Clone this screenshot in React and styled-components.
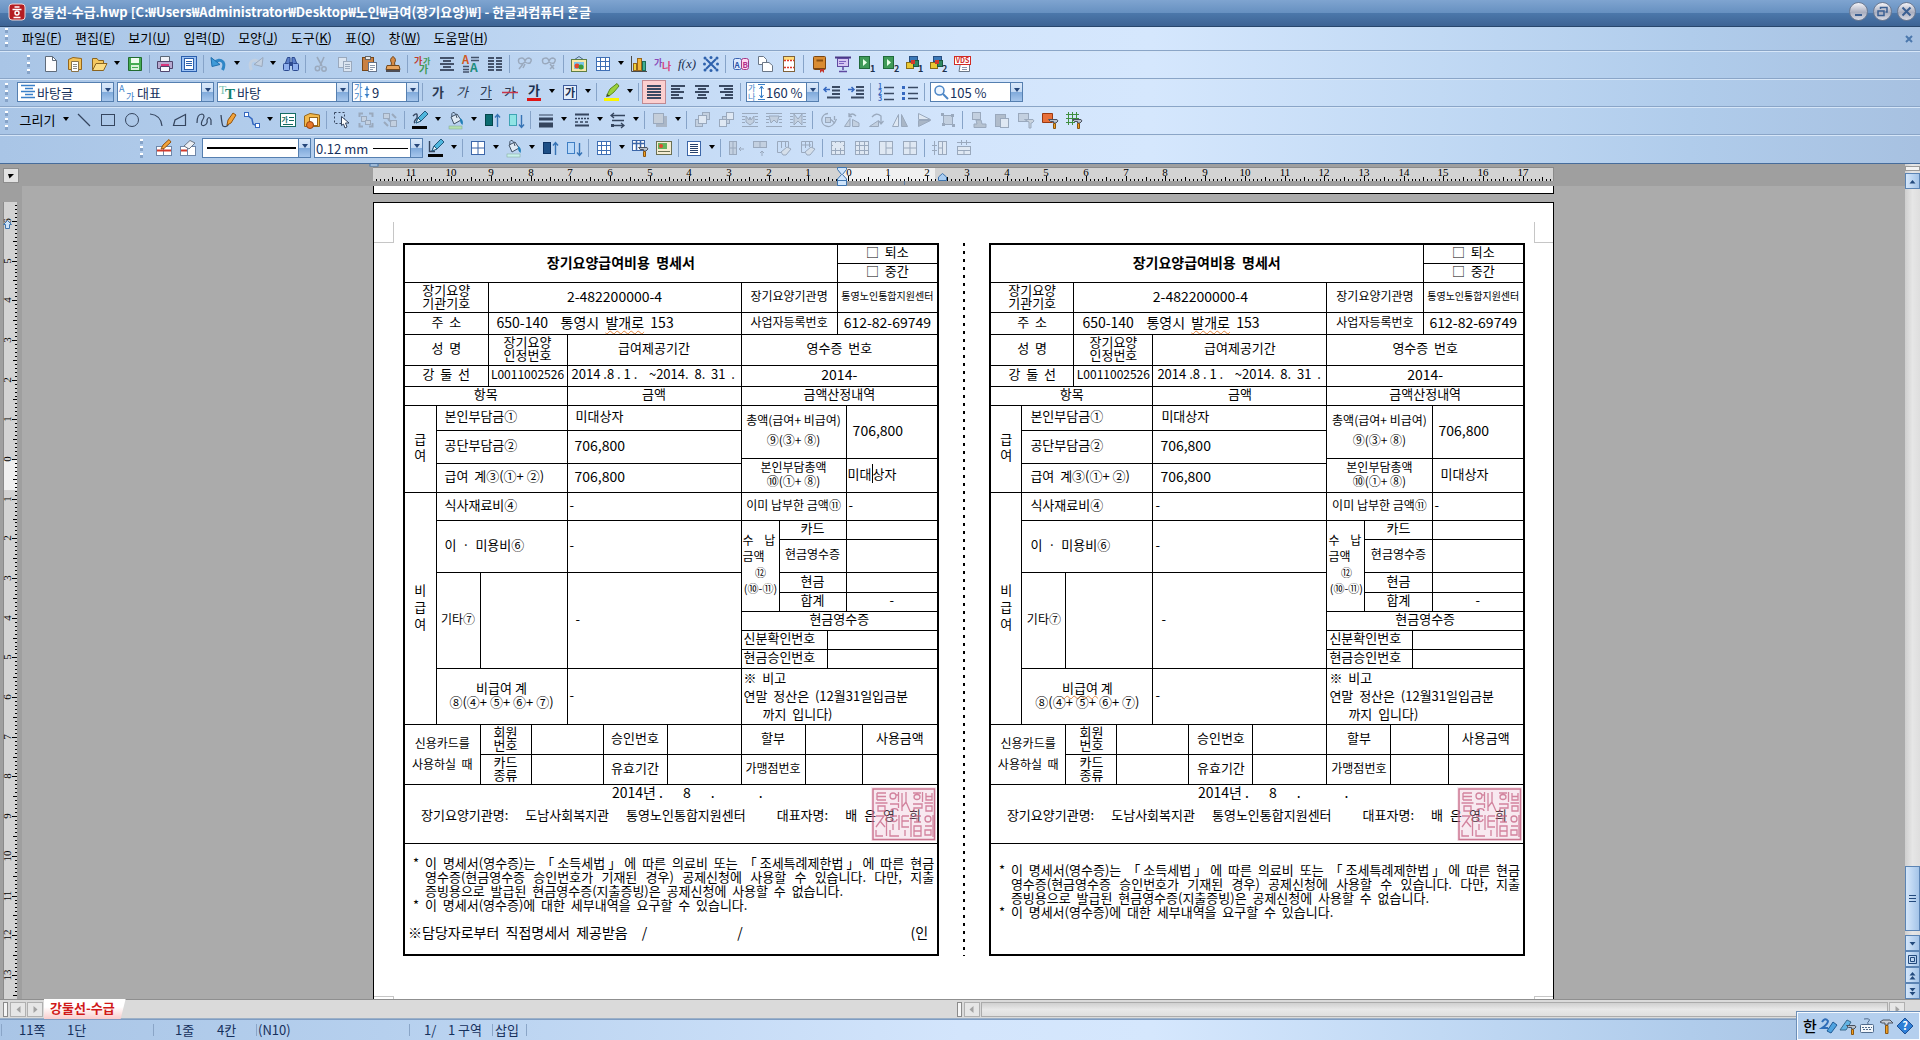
import React from 'react';
import styled, { createGlobalStyle, css } from 'styled-components';

const UI = '"Noto Sans CJK KR", "Noto Sans", sans-serif';
const INK = '#16305c';

const Global = createGlobalStyle`
  * { box-sizing: border-box; }
  html, body { margin: 0; height: 100%; }
  body { font-family: ${UI}; font-size: 13px; overflow: hidden; background: #ababab; }
  button, select, input { font: inherit; color: inherit; margin: 0; }
`;

/* ---------- icons, all on an 18 x 18 grid ---------- */

const line = (d, c = '#3a4a63', w = 1, extra = {}) => (
  <path d={d} stroke={c} strokeWidth={w} fill="none" {...extra} />
);
const fill = (d, c, s) => <path d={d} fill={c} stroke={s || 'none'} />;
const GR = '#9aa9bd';
const GF = '#c3d0e0';
const ga = (c, extra) => (
  <text x="9" y="14" fontSize="13" fontWeight="700" textAnchor="middle" fill={c} {...extra}>가</text>
);
const lines = (rows, c = '#3a4a63') => rows.map(([x, w], i) => (
  <rect key={i} x={x} y={2 + i * 3} width={w} height="2" fill={c} />
));
const grid = (c, bg = '#fff') => (
  <>
    <rect x="2.5" y="2.5" width="13" height="13" fill={bg} stroke={c} />
    {line('M6.5 2.5V15.5M11.5 2.5V15.5M2.5 6.5H15.5M2.5 11.5H15.5', c)}
  </>
);
const pen = (x = 0, y = 0) => (
  <g transform={`translate(${x} ${y})`}>
    {fill('M4 13L6 8L13 1L16 4L9 11Z', '#4fb6dd', '#24597c')}
    {fill('M4 13L6 8L9 11Z', '#e8f4fa', '#24597c')}
  </g>
);
const roller = (
  <>
    {fill('M7.5 8.5H16L17 10L15 12H12.5V10.5H9.5Z', '#b9c1cc', '#4a5260')}
    {fill('M12.5 12.5H14.5V17.5H12.5Z', '#f2a020', '#8a5510')}
  </>
);
const bucket = (under) => (
  <>
    {fill('M4 6L10 3L14 9L7 13Z', '#dfeaf4', '#3f5064')}
    {line('M5 6Q4 1 7 1.500Q9 2 10 7', '#3f5064')}
    {fill('M13 7Q17 9 15.500 14Q12.500 12 13 7Z', '#1f7fb8')}
    <rect x="2" y="15" width="13" height="3" fill={under} stroke="#7fa890" strokeWidth=".5" />
  </>
);
const play = (n) => (
  <>
    <rect x="1.5" y="1.5" width="10" height="12" fill="#3f9a58" stroke="#1f6a3b" />
    {fill('M5 4L9 7.500L5 11Z', '#e8ffe8')}
    <text x="12" y="17" fontSize="9" fontWeight="700" fill="#1c2f4c">{n}</text>
  </>
);
const cubes = (n) => (
  <>
    <rect x="3.500" y="1.500" width="8" height="5" fill="#3a78b8" stroke="#274e80" />
    <rect x="0.500" y="7.500" width="7" height="6" fill="#e9c832" stroke="#8a6d17" />
    <rect x="7.500" y="5.500" width="5" height="6" fill="#2f8a63" stroke="#1c5a40" />
    <rect x="5" y="5" width="4" height="4" fill="#d33a2c" />
    <text x="12" y="17" fontSize="9" fontWeight="700" fill="#1c2f4c">{n}</text>
  </>
);
const wrap = (inner) => (
  <>
    {line('M1 2.5H17M1 5.5H4M14 5.5H17M1 8.5H4M14 8.5H17M1 11.5H4M14 11.5H17M1 15.5H17', GR)}
    {fill(inner, GF, GR)}
  </>
);
const rubber = (extra) => (
  <>
    {line('M2.5 2.5H13.5V9M2.5 2.5V13.5H6M6.500 2.500V9M10.5 2.5V8', GR)}
    {fill('M6 13L12 8L16 10L11 16H8Z', '#d5dfea', GR)}
    {extra}
  </>
);
const upDown = (c1, c2, up) => (
  <>
    <rect x="2.5" y="3.5" width="7" height="11" fill={c1} stroke={c2} />
    {up ? line('M14.5 4V16M12 6.5L14.5 3.5L17 6.5', '#3673b5', 1.4) : line('M14.5 4V16M12 13.5L14.5 16.5L17 13.5', '#3673b5', 1.4)}
  </>
);

const ICONS = {
  new: ['새 문서', <>{fill('M3.5 1.5H10.5L14.5 5.5V16.5H3.5Z', '#fdfdff', '#5f6b7a')}{line('M10.5 1.5V5.5H14.5', '#5f6b7a')}</>],
  tmpl: ['문서마당', <>{fill('M2.500 4.500L7 2.500L15.500 3.500V14.500H2.500Z', '#f3c35a', '#96661b')}{fill('M5.5 6.5H12.5V16.5H5.5Z', '#fff', '#8a7348')}{line('M7 9.5H11M7 11.5H11M7 13.5H11', '#8b8b8b')}</>],
  folder: ['불러오기', <>{fill('M2.5 15.500V3.500H7L8.500 5.500H13.500V8', '#f4c75f', '#8a6420')}{fill('M2.5 15.5L6 8.5H17L13.5 15.5Z', '#fbdc84', '#8a6420')}</>],
  save: ['저장하기', <>{fill('M2.5 2.500H15.500V15.500H2.500Z', '#45ab52', '#226b30')}<rect x="5" y="3" width="8" height="5" fill="#eefbef" /><rect x="5" y="10" width="8" height="5" fill="#d8f2da" /><rect x="6" y="12" width="6" height="1" fill="#45ab52" /></>],
  print: ['인쇄', <>{fill('M4.500 1.500H13.500V6.500H4.500Z', '#eef2f9', '#596777')}{fill('M1.5 6.500H16.500V13.500H1.500Z', '#b7a9cf', '#51466d')}<rect x="5" y="9" width="8" height="2" fill="#d9357d" />{fill('M4.500 11.500H13.500V16.500H4.500Z', '#f7f9ff', '#51466d')}</>],
  preview: ['미리 보기', <><rect x="1.5" y="1.5" width="15" height="15" fill="#9cc2f3" stroke="#2b5fad" /><rect x="4.5" y="3.5" width="9" height="11" fill="#fff" stroke="#2b5fad" />{line('M6 6.5H12M6 8.5H12M6 10.5H12', '#2b5fad')}</>],
  undo: ['되돌리기', <>{line('M4 8Q9 3 13 7Q15 10 12.500 15', '#2f86c6', 3)}{fill('M1 2.500L2 11.500L10 9.500Z', '#3e9ad8', '#1f6fae')}</>],
  redo: ['다시 실행', <>{line('M14 8Q9 3 5 7Q3 10 5.500 15', GF, 3)}{fill('M17 2.500L16 11.500L8 9.500Z', GF, GR)}</>],
  find: ['찾기', <>{fill('M3.500 8L5.500 2.500H8V8M10 8V2.500H12.500L14.500 8', '#5b7fc9', '#2c4a90')}<rect x="1.500" y="8.500" width="6" height="7" rx="1" fill="#8fb0ee" stroke="#2c4a90" /><rect x="10.500" y="8.500" width="6" height="7" rx="1" fill="#8fb0ee" stroke="#2c4a90" /><rect x="7" y="7" width="4" height="4" fill="#2c4a90" /></>],
  cut: ['오려 두기', <>{line('M5 2L10 11M12 2L8 11', GR, 1.6)}<circle cx="5.500" cy="13.500" r="2.200" fill="none" stroke={GR} strokeWidth="1.500" /><circle cx="12" cy="14" r="2.200" fill="none" stroke={GR} strokeWidth="1.500" /></>],
  copy: ['복사하기', <><rect x="2.500" y="2.500" width="8" height="10" fill="#dbe5f1" stroke={GR} /><rect x="7.500" y="6.500" width="8" height="10" fill="#dbe5f1" stroke={GR} />{line('M9 9.500H14M9 11.500H14M9 13.500H14', GR)}</>],
  paste: ['붙이기', <><rect x="2.500" y="2.500" width="11" height="13" fill="#c98042" stroke="#774617" /><rect x="5.500" y="1.500" width="5" height="3" fill="#e8e8e8" stroke="#666" /><rect x="8.500" y="7.500" width="8" height="9" fill="#fff" stroke="#65738a" />{line('M10 10.500H15M10 12.500H15M10 14.500H13', '#8a97ab')}</>],
  stamp: ['모양 복사', <>{fill('M7.500 8Q5 4 9 1.500Q13 4 10.500 8L11 10.500H7Z', '#d58a45', '#74481c')}{fill('M3 10.500H15L16 14.500H2Z', '#e7a35c', '#74481c')}<rect x="2" y="15" width="14" height="2" fill="#4d4d55" /></>],
  charshape: ['글자 모양', <><text x="0" y="9" fontSize="9" fontWeight="700" fill="#c23a2c">가</text><text x="9" y="9" fontSize="8" fontWeight="700" fill="#3f9a58">가</text><text x="5" y="18" fontSize="10" fontWeight="700" fill="#3f9a58">가</text></>],
  parashape: ['문단 모양', <>{lines([[2, 14], [5, 8], [2, 14], [5, 8], [2, 14]], '#44526a')}</>],
  style: ['스타일', <><text x="0" y="9" fontSize="11" fontWeight="700" fill="#d1571d">A</text><text x="8" y="17" fontSize="12" fontWeight="700" fill="#1f8d7d">A</text>{line('M9 2.500H17M9 5.500H17M1 11.500H7M1 14.500H7M1 17H7', '#44526a', 1.500)}</>],
  columns: ['다단', <>{[2, 5, 8, 11, 14].map((y) => <g key={y}><rect x="2" y={y} width="6" height="2" fill="#44526a" /><rect x="10" y={y} width="6" height="2" fill="#44526a" /></g>)}</>],
  link1: ['하이퍼링크', <>{line('M3 8Q1 3 6 3Q8 3 9 6Q10 3 13 3Q17 4 14 8Q12 9 9 7Q6 10 3 8M7 9L3 14M9 9L7 13', GR, 1.500)}</>],
  link2: ['연결 삭제', <>{line('M3 8Q1 3 6 3Q8 3 9 6Q10 3 13 3Q17 4 14 8Q12 9 9 7Q6 10 3 8M10 9L14 14M14 10L10 14', GR, 1.500)}</>],
  picture: ['그림', <>{line('M4 5L9 1.500L14 5', '#4b6a8a')}<rect x="1.500" y="4.500" width="15" height="12" fill="#f7e9a8" stroke="#5f7d42" /><rect x="4" y="7" width="10" height="7" fill="#7cc5e8" /><circle cx="7" cy="11" r="2.500" fill="#e4472a" /><circle cx="11" cy="12" r="2.500" fill="#3b9a3a" /></>],
  table: ['표', grid('#3f6fb4')],
  chart: ['차트', <>{line('M1.500 1V16.500H17', '#4a4a4a')}<rect x="3.500" y="8.500" width="3" height="7" fill="#f2d23a" stroke="#96661b" /><rect x="7.500" y="3.500" width="4" height="12" fill="#f2b43a" stroke="#96661b" /><rect x="12.500" y="6.500" width="3" height="9" fill="#3fae92" stroke="#1c6a57" /></>],
  gana: ['글맵시', <><text x="0" y="11" fontSize="9" fontWeight="700" fill="#8b49b9">가</text><text x="8" y="15" fontSize="10" fontWeight="700" fill="#d8457f">나</text></>],
  fx: ['수식', <text x="9" y="13" fontSize="13" fontStyle="italic" fontFamily="Liberation Serif" textAnchor="middle" fill="#1b2f4f">f(x)</text>],
  snow: ['문자표', <>{line('M4 4L14 14M14 4L4 14', '#2f62ad', 2)}{[[9, 2.5], [9, 15.5], [2.5, 9], [15.5, 9], [3, 3], [15, 3], [3, 15], [15, 15]].map(([x, y]) => <circle key={`${x} ${y}`} cx={x} cy={y} r="1.500" fill="#2f62ad" />)}</>],
  ab: ['찾아 바꾸기', <><rect x="1.500" y="3.500" width="8" height="11" rx="2" fill="#dbe9ff" stroke="#3a62b0" /><rect x="9.500" y="3.500" width="7" height="11" rx="2" fill="#ffd6ef" stroke="#a33a86" /><text x="2.500" y="12.500" fontSize="8" fontWeight="700" fill="#2c55a8">A</text><text x="10.500" y="12.500" fontSize="8" fontWeight="700" fill="#b0308a">B</text></>],
  pages: ['쪽 복사', <>{fill('M2.500 1.500H7.500L10.500 4.500V9.500H2.500Z', '#fff', '#6b7787')}{fill('M6.500 7.500H13L16.500 10.500V16.500H6.500Z', '#fff', '#6b7787')}</>],
  pagered: ['쪽 여백', <><rect x="3.500" y="1.500" width="11" height="15" fill="#fff" stroke="#80623a" /><rect x="4" y="2" width="10" height="3" fill="#ffdc7a" />{line('M4 5.500H14M4 12.500H14', '#e0382a', 1.500, { strokeDasharray: '2 1' })}</>],
  book: ['사전', <><rect x="3.500" y="1.500" width="12" height="13" rx="1" fill="#d98c32" stroke="#7a4612" />{line('M6.500 5.500H13', '#8a5010', 2)}<path d="M10 14V18L12 16L14 18V14Z" fill="#c3352b" />{line('M3.500 13.500H15.500', '#7a4612')}</>],
  board: ['프레젠테이션', <>{line('M1 2.500H17', '#4b3a86', 2)}<rect x="3.500" y="3.500" width="11" height="8" fill="#d6c7f2" stroke="#5f4aa0" />{line('M5 6.500H12M5 8.500H10', '#7a61c0')}{line('M9 12V15M5 16.500H13', '#5f4aa0', 1.500)}</>],
  play1: ['매크로 1', play(1)],
  play2: ['매크로 2', play(2)],
  cube1: ['스크립트 1', cubes(1)],
  cube2: ['스크립트 2', cubes(2)],
  vds: ['VDS', <>{fill('M6.500 7.500H15.500V16.500H5Z', '#fff', '#6b7787')}{line('M8 12.500H13M8 14.500H13', '#8a97ab')}<rect x="0.500" y="1.500" width="16" height="8" fill="#fff" stroke="#d12b23" /><text x="8.500" y="8" fontSize="7" fontWeight="700" textAnchor="middle" fill="#d12b23">VDS</text></>],

  bold: ['진하게', ga('#2c3a52')],
  italic: ['기울임', ga('#2c3a52', { fontStyle: 'italic', fontWeight: 400 })],
  under: ['밑줄', <>{ga('#2c3a52', { fontWeight: 400, y: 13 })}{line('M3 16.500H15', '#2c3a52')}</>],
  strike: ['취소선', <>{ga('#2c3a52', { fontWeight: 400 })}{line('M1 9.500H17', '#c9344a', 1.500)}</>],
  color: ['글자 색', <>{ga('#1b2f4f', { y: 12 })}<rect x="2" y="15" width="14" height="3" fill="#e01414" /></>],
  boxga: ['글자 테두리', <><rect x="2.500" y="2.500" width="13" height="14" fill="#e3eefc" stroke="#3d5b9a" /><text x="9" y="13.500" fontSize="11" fontWeight="700" textAnchor="middle" fill="#1b2f4f">가</text></>],
  marker: ['형광펜', <>{fill('M4 12L7 6L14 0.500L16 3L11 9L6 13Z', '#9bd03c', '#5b8a20')}{fill('M3 14L4 11L7 13Z', '#3b4a2a')}<rect x="1" y="15" width="15" height="3" fill="#fbf500" /></>],
  just: ['양쪽 정렬', lines([[2, 14], [2, 14], [2, 14], [2, 14], [2, 14]])],
  left: ['왼쪽 정렬', lines([[2, 14], [2, 9], [2, 13], [2, 8], [2, 12]])],
  center: ['가운데 정렬', lines([[2, 14], [5, 8], [2, 14], [5, 8], [4, 10]])],
  right: ['오른쪽 정렬', lines([[2, 14], [7, 9], [3, 13], [8, 8], [4, 12]])],
  outdent: ['내어쓰기', <>{line('M9 4H17M9 7.500H17M9 11H17M4 14.500H17', '#3a4a63', 2)}{line('M1 6.500H7M3.500 4L1 6.500L3.500 9', '#3568c0', 1.500)}</>],
  indent: ['들여쓰기', <>{line('M9 4H17M9 7.500H17M9 11H17M4 14.500H17', '#3a4a63', 2)}{line('M1 6.500H7M4.500 4L7 6.500L4.500 9', '#3568c0', 1.500)}</>],
  num: ['문단 번호', <>{['1', '2', '3'].map((n, i) => <text key={n} x="1" y={6 + i * 6} fontSize="7" fontWeight="700" fill="#3568c0">{n}</text>)}{line('M7 4.500H17M7 10.500H17M7 16.500H17', '#3a4a63', 1.500)}</>],
  bullet: ['글머리표', <>{[3, 9, 14].map((y) => <rect key={y} x="1" y={y} width="3" height="3" fill="#3568c0" />)}{line('M7 4.500H17M7 10.500H17M7 15.500H17', '#3a4a63', 1.500)}</>],

  dline: ['선', line('M3 3L15 15', '#35455e', 1.300)],
  drect: ['사각형', <rect x="2.500" y="3.500" width="13" height="11" fill="none" stroke="#35455e" />],
  dell: ['타원', <circle cx="9" cy="9" r="6.500" fill="none" stroke="#35455e" />],
  darc: ['호', line('M3 3Q14 4 15 15', '#35455e', 1.200)],
  dpoly: ['다각형', line('M2.500 14.500L4 9L14.500 3.500V14.500Z', '#35455e', 1.200)],
  dcurve: ['곡선', line('M2 12Q2 3 7 3Q11 4 7 10Q5 15 9 14.500Q13 13 12 9Q14 4 16 9V14', '#35455e', 1.200)],
  dpen: ['자유선', <>{line('M2 4Q3 14 4 15Q8 17 10 12', '#35455e', 1.300)}{fill('M8 14L9 9L14 2L17 4L12 12Z', '#f2a33a', '#93540f')}</>],
  dconn: ['연결선', <>{line('M4 4L9 8L10 13L14 15', '#3568c0', 1.500)}<rect x="1.500" y="1.500" width="4" height="4" fill="#fff" stroke="#3568c0" /><rect x="12.500" y="12.500" width="4" height="4" fill="#fff" stroke="#3568c0" /></>],
  dtext: ['글상자', <><rect x="1.500" y="2.500" width="15" height="13" fill="#fff" stroke="#146b62" /><text x="2.500" y="11" fontSize="7" fontWeight="700" fill="#146b62">가</text>{line('M10 6.500H15M10 9.500H15M4 13.500H14', '#146b62')}</>],
  dfold: ['그리기마당', <>{fill('M1.500 15.500V5L7 2.500L16.500 4V15.500Z', '#f3b94c', '#96661b')}<rect x="6.500" y="6.500" width="8" height="8" fill="#fff" stroke="#96661b" /><circle cx="7" cy="14" r="3.500" fill="#e8772a" stroke="#94420f" /></>],
  dsel: ['개체 선택', <><rect x="1.500" y="1.500" width="10" height="11" fill="none" stroke="#35455e" strokeDasharray="2 2" />{fill('M8.500 5.500L16 12H12.500L14 16L12 17L10.500 13L8.500 14.500Z', '#fff', '#35455e')}</>],
  dgrp: ['개체 묶기', <>{line('M2.500 6V2.500H6M12 2.500H15.500V6M2.500 12V15.500H6M12 15.500H15.500V12', GR, 2)}<rect x="4.500" y="5.500" width="5" height="5" fill={GF} stroke={GR} /><rect x="8.500" y="9.500" width="5" height="4" fill={GF} stroke={GR} /></>],
  dung: ['개체 풀기', <><rect x="2.500" y="2.500" width="6" height="5" fill={GF} stroke={GR} /><rect x="9.500" y="9.500" width="6" height="6" fill={GF} stroke={GR} />{line('M11 3L15 7M3 11L7 15M7 8L10 11', GR, 2)}</>],
  dpenc: ['선 색', <>{line('M2 5Q7 0 6 7Q2 11 4 12', '#35455e', 1.400)}{pen(1, -1)}<rect x="1" y="15" width="15" height="3" fill="#050505" /></>],
  bpen: ['테두리 색', <>{line('M2.500 2V12.500H8', '#35455e', 1.400)}{pen(1, -1)}<rect x="1" y="15" width="15" height="3" fill="#050505" /></>],
  dfill: ['채우기', bucket('#b4dfb0')],
  tfill: ['셀 배경', bucket('#c8f0ec')],
  dup: ['앞으로', upDown('#0b6b70', '#04454a', true)],
  ddn: ['뒤로', upDown('#8fe4e4', '#3fa4b4', false)],
  tup: ['셀 진하게', upDown('#1d4f86', '#0d3364', true)],
  tdn: ['셀 연하게', upDown('#b9d9fa', '#3f7fc4', false)],
  dwid: ['선 굵기', <>{line('M2 4H16', '#35455e', 1)}{line('M2 8H16', '#35455e', 3)}{line('M2 14H16', '#35455e', 5)}</>],
  ddash: ['선 종류', <>{line('M2 3.500H16M2 14.500H16', '#35455e', 2)}{line('M2 7.500H16', '#35455e', 1.500, { strokeDasharray: '2 1' })}{line('M2 11H16', '#35455e', 1.500, { strokeDasharray: '3 2' })}</>],
  darr: ['화살표', <>{line('M2 4.500H16M5 2L2 4.500L5 7M3 9.500H15M3 14.500H14M12 12L15 14.500L12 17', '#35455e', 1.300)}<rect x="2" y="13" width="3" height="3" fill="#35455e" /></>],
  dshad: ['그림자', <><rect x="5" y="5" width="11" height="11" fill="#aab6c6" /><rect x="2.500" y="2.500" width="10" height="10" fill="#c5ced9" stroke={GR} /></>],
  g1: ['맨 앞으로', <><rect x="2.500" y="8.500" width="7" height="7" fill={GF} stroke={GR} /><rect x="9.500" y="1.500" width="7" height="7" fill={GF} stroke={GR} /><rect x="5.500" y="4.500" width="8" height="8" fill="#dfe8f3" stroke={GR} /></>],
  g2: ['맨 뒤로', <><rect x="5.500" y="5.500" width="7" height="7" fill={GF} stroke={GR} /><rect x="2.500" y="8.500" width="7" height="7" fill="#dfe8f3" stroke={GR} /><rect x="9.500" y="1.500" width="7" height="7" fill="#dfe8f3" stroke={GR} /></>],
  g3: ['어울림', wrap('M5 5L8 9L9 6L10 9L13 5V11L9 14L5 11Z')],
  g4: ['자리 차지', wrap('M4 5H14L12 12L9 9L6 12Z')],
  g5: ['글 뒤로', wrap('M5 3L9 8L13 3V14L9 10L5 14Z')],
  g6: ['회전', <>{line('M9 2.500A6.500 6.500 0 1 0 15 12M15.500 9L15.500 5M12 8.500L15.500 12L17.500 8', GR, 1.300)}<rect x="6.500" y="6.500" width="5" height="5" fill={GF} stroke={GR} /></>],
  g7: ['왼쪽 회전', <>{fill('M1.500 15.500L7 7.500V15.500Z', GF, GR)}{fill('M9.500 15.500V8.500L16 12V15.500Z', GF, GR)}{line('M6 5Q9 1 13 5M6 2V5.500H9', GR, 1.300)}</>],
  g8: ['오른쪽 회전', <>{fill('M2.500 15.500L11.500 9.500V15.500Z', GF, GR)}{line('M5 6Q9 1 14 5V13M12 10L14 13L16.500 10', GR, 1.300)}</>],
  g9: ['좌우 대칭', <>{fill('M1.500 15.500L7.500 3.500V15.500Z', '#dfe8f3', GR)}{fill('M16.500 15.500L10.500 3.500V15.500Z', '#a9b6c6', GR)}</>],
  g10: ['상하 대칭', <>{fill('M3.500 2.500L15.500 8.500H3.500Z', '#dfe8f3', GR)}{fill('M3.500 15.500L15.500 9.500H3.500Z', '#a9b6c6', GR)}</>],
  g11: ['점 편집', <><rect x="4.500" y="4.500" width="9" height="9" fill={GF} stroke={GR} />{[[2, 2], [12, 3], [3, 12], [13, 13]].map(([x, y]) => <rect key={x} x={x} y={y} width="3" height="3" fill={GR} />)}</>],
  g12: ['개체 복사', <><rect x="3.500" y="1.500" width="8" height="7" fill={GF} stroke={GR} />{fill('M7 9H12L13 13H17V16.500H5V13H8Z', '#b6c2d0', GR)}</>],
  g13: ['개체 붙이기', <><rect x="2.500" y="3.500" width="10" height="12" fill="#b0bccb" stroke={GR} /><rect x="7.500" y="7.500" width="8" height="9" fill="#dfe8f3" stroke={GR} /></>],
  g14: ['개체 속성', <><rect x="1.500" y="2.500" width="10" height="8" fill={GF} stroke={GR} />{fill('M7.500 8.500H16L17 10L15 12H14V17H12V11Z', '#c9d3de', GR)}</>],
  oroll: ['배경 속성', <>{fill('M1.500 2.500H11.500V11.500H1.500Z', '#e8703a', '#9a3910')}{roller}</>],
  groll: ['격자 설정', <>{line('M1 3.500H14M1 7.500H14M1 11.500H10M3.500 1V14M7.500 1V14M11.500 1V10', '#3f8f3f')}{roller}</>],

  tdraw: ['표 그리기', <><rect x="1.500" y="7.500" width="15" height="9" fill="#fff" stroke="#6f86a8" />{line('M8.500 7.500V16.500', '#6f86a8')}{line('M2 11.500H16', '#d23a2c', 2)}{fill('M6 10L8 6L14 0.500L16 3L9 9.500Z', '#f2a33a', '#93540f')}</>],
  terase: ['표 지우개', <><rect x="1.500" y="7.500" width="15" height="9" fill="#fff" stroke="#6f86a8" />{line('M8.500 7.500V16.500', '#6f86a8')}{line('M2 11.500H8', '#d23a2c', 2)}{fill('M5 7L11 1.500L16 4L10 10Z', '#eceff4', '#6b7787')}</>],
  tborder: ['테두리', <><rect x="2.500" y="2.500" width="13" height="13" fill="#fff" stroke="#3c66a8" />{line('M9 2.500V15.500M2.500 9H15.500', '#3c66a8')}</>],
  troll: ['표 속성', <><rect x="1.500" y="1.500" width="12" height="10" fill="#fff" stroke="#3c66a8" />{line('M1.500 4.500H13.500M5.500 1.500V11M9.500 1.500V11', '#3c66a8', 1.500)}{roller}</>],
  tpic: ['셀 그림', <><rect x="1.500" y="2.500" width="15" height="13" fill="#f4ecd2" stroke="#6a6f52" /><rect x="3" y="4" width="9" height="6" fill="#64b35c" /><circle cx="6" cy="7" r="2" fill="#e4472a" />{line('M3 12.500H15', '#6a6f52')}</>],
  tlist: ['줄 간격', <><rect x="2.500" y="2.500" width="13" height="14" fill="#fff" stroke="#3c66a8" />{line('M5 5.500H13M5 7.500H13M5 9.500H13M5 11.500H13M5 13.500H13', '#27416c')}</>],
  h1: ['칸 추가', <><rect x="2.500" y="2.500" width="7" height="13" fill={GF} stroke={GR} />{line('M6 2.500V15.500M2.500 9H9.500M17 10H12M14 8L12 10L14 12', GR)}</>],
  h2: ['줄 추가', <><rect x="2.500" y="2.500" width="13" height="6" fill={GF} stroke={GR} />{line('M9 2.500V8.500M11 17V12M9 14L11 12L13 14', GR)}</>],
  h3: ['칸 지우기', rubber()],
  h4: ['줄 지우기', rubber(line('M3 6H12', GR))],
  h5: ['셀 합치기', <>{grid(GR, '#dfe8f3')}<rect x="4" y="4" width="10" height="5" fill="#dfe8f3" /></>],
  h6: ['셀 나누기', grid(GR, '#dfe8f3')],
  h7: ['셀 높이', <><rect x="2.500" y="2.500" width="13" height="13" fill="#dfe8f3" stroke={GR} />{line('M9 2.500V15.500M9 9H15.500', GR)}</>],
  h8: ['셀 너비', <><rect x="2.500" y="2.500" width="13" height="13" fill="#dfe8f3" stroke={GR} />{line('M9 2.500V15.500M2.500 9H15.500', GR)}</>],
  h9: ['줄 높이 같게', <>{line('M3.500 2V16M1 6.500H6M1 11.500H6', GR)}<rect x="7.500" y="2.500" width="8" height="13" fill="#dfe8f3" stroke={GR} />{line('M11.500 2.500V15.500M7.500 9H11.500', GR)}</>],
  h10: ['칸 너비 같게', <>{line('M2 3.500H16M6.500 1V6M11.500 1V6', GR)}<rect x="2.500" y="7.500" width="13" height="8" fill="#dfe8f3" stroke={GR} />{line('M2.500 11.500H15.500M9 11.500V15.500', GR)}</>],

  cstyle: ['', <>{line('M2 2.500H16M6 5.500H14M2 8.500H16M6 11.500H14M2 14.500H16', '#3a80c8', 1.500)}</>],
  clang: ['', <><text x="0" y="9" fontSize="9" fill="#3a80c8">A</text><text x="7" y="17" fontSize="9" fill="#3a80c8">가</text></>],
  cfont: ['', <><text x="0" y="11" fontSize="12" fontFamily="Liberation Serif" fill="#7fc4b4">T</text><text x="6" y="16" fontSize="15" fontWeight="700" fontFamily="Liberation Serif" fill="#12806c">T</text></>],
  csize: ['', <><text x="0" y="8" fontSize="9" fill="#3a80c8">가</text><text x="0" y="17" fontSize="9" fill="#3a80c8">가</text>{line('M13 3V15', '#3a80c8')}{fill('M10.500 7L13 4L15.500 7ZM10.500 11L13 14L15.500 11Z', '#3a80c8')}</>],
  cspace: ['', <><text x="0" y="8" fontSize="8" fill="#3a80c8">가</text><text x="0" y="17" fontSize="8" fill="#3a80c8">나</text>{line('M10 1.500H17M10 16.500H17M13.500 3V15M11.500 6L13.500 3L15.500 6M11.500 12L13.500 15L15.500 12', '#3a80c8')}</>],
  czoom: ['', <><circle cx="7.500" cy="7.500" r="4.500" fill="#eef6ff" stroke="#4c86c6" strokeWidth="1.500" />{line('M11 11L16 16', '#4c86c6', 2)}</>],
};

const Svg = styled.svg`
  display: block;
  flex: none;
  width: 18px;
  height: 18px;
  overflow: visible;
  font-family: ${UI};
`;
const Icon = ({ name }) => (
  <Svg viewBox="0 0 18 18" aria-hidden="true">{ICONS[name][1]}</Svg>
);

/* ---------- application frame ---------- */

const sheen = 'linear-gradient(90deg, #a9c5e6 0%, #b6d0ee 20%, #d3e5fc 50%, #d5e7fd 60%, #c1d9f4 75%, #b0cceb 88%, #a7c1e1 100%)';

const Frame = styled.div`
  display: flex;
  flex-direction: column;
  height: 100vh;
  color: #000;
`;
const TitleBar = styled.header`
  display: flex;
  align-items: center;
  height: 27px;
  padding: 0 4px 3px 8px;
  gap: 5px;
  border-bottom: 1px solid #28466c;
  background: linear-gradient(#7fa4d0 0, #6690c0 50%, #4c78ab 50%, #3d6394 100%);
`;
const AppTitle = styled.h1`
  flex: 1;
  margin: 0;
  font-size: 13px;
  line-height: 20px;
  font-weight: 700;
  color: #fff;
  white-space: pre;
`;
const RoundButton = styled.button`
  display: grid;
  place-items: center;
  width: 19px;
  height: 19px;
  padding: 0;
  border: 1px solid #6c7a92;
  border-radius: 50%;
  background: linear-gradient(#f4f4f8, #a9aebf 55%, #d8dae4);
`;
const MenuBar = styled.nav`
  display: flex;
  align-items: center;
  height: 24px;
  padding: 0 7px 2px 2px;
  border-bottom: 1px solid #8aa5c7;
  background: ${sheen};
`;
const MenuItem = styled.button`
  padding: 0;
  margin-right: 13px;
  border: 0;
  background: none;
  line-height: 20px;
  white-space: nowrap;
`;
const MenuClose = styled(MenuItem)`
  margin: 0 0 0 auto;
`;
const ToolRow = styled.div`
  display: flex;
  align-items: center;
  height: ${(p) => (p.$last ? 29 : 28)}px;
  padding: 0 0 ${(p) => (p.$last ? 3 : 2)}px ${(p) => p.$indent || 0}px;
  border-top: 1px solid #d6e6f8;
  border-bottom: 1px solid ${(p) => (p.$last ? '#466c9b' : '#8aa5c7')};
  background: ${sheen};
`;
const Grip = styled.span`
  flex: none;
  width: 3px;
  height: 19px;
  margin: 0 ${(p) => p.$after}px 0 3px;
  background: repeating-linear-gradient(#fff 0 2px, #86a3c8 2px 5px, transparent 5px 7px);
`;
const IconButton = styled.button`
  display: grid;
  place-items: center;
  flex: none;
  width: 24px;
  height: 24px;
  padding: 0;
  border: 1px solid ${(p) => (p.$on ? '#c08a92' : 'transparent')};
  background: ${(p) => (p.$on ? '#fbcfcf' : 'none')};
`;
const Arrow = styled.button`
  flex: none;
  width: 12px;
  height: 24px;
  padding: 0;
  border: 0;
  background: none;
  &::before {
    content: '';
    display: block;
    margin: -2px auto 0;
    width: 0;
    border: 3px solid transparent;
    border-top: 4px solid #000;
    border-bottom: 0;
  }
`;
const Divider = styled.span`
  flex: none;
  width: 1px;
  height: 18px;
  margin: 0 3px 0 2px;
  background: #86a3c8;
`;
const ComboBox = styled.span`
  display: flex;
  align-items: center;
  flex: none;
  width: ${(p) => p.$w}px;
  height: 20px;
  margin: 0 1px 0 2px;
  padding-left: 1px;
  border: 1px solid #557fb0;
  background: #fff;
  color: ${INK};
`;
const Picker = styled.select`
  appearance: none;
  flex: 1;
  min-width: 0;
  height: 18px;
  padding: 0;
  border: 0;
  background: none;
  font-size: 13px;
  line-height: 17px;
`;
const Cap = styled.span`
  flex: none;
  width: 12px;
  align-self: stretch;
  display: grid;
  place-items: center;
  padding-bottom: 5px;
  border-left: 1px solid #557fb0;
  background: linear-gradient(#dceafb, #c3d9f3 50%, #7fa9da 50%, #a6c6ec);
  &::before {
    content: '';
    border: 3px solid transparent;
    border-top: 4px solid #27477a;
    border-bottom: 0;
  }
`;
const Stroke = styled.span`
  flex: 1;
  height: ${(p) => p.$h}px;
  margin: 0 2px 0 3px;
  background: #000;
`;
const DrawMenu = styled.button`
  width: 45px;
  padding: 0;
  border: 0;
  background: none;
  line-height: 20px;
`;

const Tools = ({ set, on }) => set.split(' ').map((k, i) => {
  if (k === '|') return <Divider key={i} />;
  if (k === 'v') return <Arrow key={i} aria-label="목록" />;
  return (
    <IconButton key={i} aria-label={ICONS[k][0]} $on={on === k}>
      <Icon name={k} />
    </IconButton>
  );
});

const LinePicker = styled(Picker)`
  flex: 0 0 ${(p) => p.$w}px;
`;

const Combo = ({ label, w, icon, value, thick, text }) => (
  <ComboBox $w={w}>
    {icon && <Icon name={icon} />}
    {thick ? (
      <LinePicker $w={text || 0} aria-label={label} defaultValue={value}>
        {value && <option>{value}</option>}
      </LinePicker>
    ) : (
      <Picker aria-label={label} defaultValue={value}><option>{value}</option></Picker>
    )}
    {thick && <Stroke $h={thick} />}
    <Cap />
  </ComboBox>
);

/* ---------- work area ---------- */

const Work = styled.main`
  flex: 1;
  min-height: 0;
  display: grid;
  grid-template-columns: 22px minmax(0, 1fr) 15px;
  grid-template-rows: 22px minmax(0, 1fr);
  background: #9f9f9f;
`;
const TabStop = styled.button`
  width: 16px;
  height: 15px;
  margin: 4px 0 0 3px;
  padding: 0;
  border: 1px solid #f4f4f4;
  outline: 1px solid #8c8c8c;
  outline-offset: -1px;
  background: #e2e2e2;
  display: grid;
  place-items: center;
`;
const HRuler = styled.div`
  display: flex;
  justify-content: center;
  padding-top: 3px;
  overflow: hidden;
`;
const VRuler = styled.div`
  grid-row: 2;
  overflow: hidden;
  padding: 16px 0 0 3px;
`;
const RulerSvg = styled.svg`
  display: block;
  flex: none;
  overflow: visible;
  font-family: "Liberation Serif", serif;
  font-size: 11px;
`;
const Desk = styled.div`
  grid-row: 2;
  grid-column: 2;
  display: flex;
  flex-direction: column;
  align-items: center;
  overflow: hidden;
  background: #ababab;
`;
const PrevSheet = styled.div`
  flex: none;
  width: 1181px;
  height: 8px;
  margin-bottom: 8px;
  border: 1px solid #000;
  border-top: 0;
  background: #fff;
`;
const Sheet = styled.article`
  flex: none;
  width: 1181px;
  min-height: 1000px;
  border: 1px solid #000;
  background: #fff;
`;
const Marks = styled.div`
  display: flex;
  justify-content: space-between;
  padding-top: ${(p) => p.$gap}px;
`;
const Mark = styled.span`
  width: ${(p) => (p.$left ? 20 : 19)}px;
  height: 21px;
  border: 0 solid #c6c6c6;
  border-${(p) => (p.$top ? 'bottom' : 'top')}-width: 1px;
  border-${(p) => (p.$left ? 'right' : 'left')}-width: 1px;
`;
const Copies = styled.div`
  display: flex;
  justify-content: space-between;
  padding: 0 28px 0 29px;
`;
const CutLine = styled.div`
  width: 2px;
  background: repeating-linear-gradient(#000 0 3px, transparent 3px 8px);
`;

const Form = styled.table`
  width: 536px;
  table-layout: fixed;
  border-collapse: collapse;
  border: 2px solid #000;
  font-size: 13px;
  line-height: 14px;
`;
const Row = styled.tr`
  height: ${(p) => p.$h}px;
`;
const Td = styled.td`
  padding: 0 0 ${(p) => (p.$flush ? 0 : 3)}px ${(p) => p.$pad || 0}px;
  border: 1px solid #000;
  text-align: ${(p) => (p.$pad ? 'left' : 'center')};
  vertical-align: middle;
  white-space: pre;
  font-weight: ${(p) => (p.$bold ? 700 : 400)};
  ${(p) => p.$size && css`font-size: ${p.$size}px;`}
  ${(p) => p.$lh && css`line-height: ${p.$lh}px;`}
`;
const Pair = styled.span`
  display: block;
  line-height: 13px;
`;
const Wavy = styled.span`
  text-decoration: underline wavy #e0823a 1px;
  text-underline-offset: 2px;
`;
const Caret = styled.span`
  border-left: 1px solid #000;
`;
const Middle = styled.span`
  display: block;
  text-align: center;
  font-size: 11px;
`;
const Indented = styled.span`
  display: block;
  padding-left: 19px;
`;
const SignBox = styled.div`
  position: relative;
  display: flex;
  flex-direction: column;
  gap: 9px;
  height: 57px;
`;
const SignDate = styled.div`
  display: flex;
  padding-left: 207px;
  font-size: 14px;
  line-height: 14px;
  & > span:nth-child(2) { margin-left: 20px; }
  & > span:nth-child(3) { margin-left: 20px; }
  & > span:nth-child(4) { margin-left: 44px; }
`;
const SignLine = styled.div`
  display: flex;
  padding-left: 16px;
  line-height: 14px;
  gap: 17px;
  & > :nth-child(4) { margin-left: 14px; }
`;
const Signer = styled.span`
  display: flex;
  gap: 7px;
  & > :last-child { margin-left: 7px; }
`;
const Seal = styled.svg`
  position: absolute;
  right: 1px;
  top: 2px;
  width: 65px;
  height: 54px;
`;
const Notes = styled.div`
  display: flex;
  flex-direction: column;
  padding: ${(p) => (p.$low ? 19 : 12)}px 3px 0 8px;
  height: 110px;
  text-align: left;
  line-height: 14px;
`;
const Note = styled.div`
  display: grid;
  grid-template-columns: 12px 1fr;
`;
const Spread = styled.span`
  display: block;
  white-space: nowrap;
  text-align: justify;
  text-align-last: justify;
`;
const Plain = styled.span`
  display: block;
  white-space: pre;
`;
const Receipt = styled.div`
  display: flex;
  margin: 12px 6px 0 -5px;
  font-size: 14px;
  line-height: 16px;
  & > :nth-child(2) { margin-left: 14px; }
  & > :nth-child(3) { margin-left: 90px; }
  & > :nth-child(4) { margin-left: auto; }
`;

const SEAL_TOP = ['M6 6H15M6 9.500H15M6 13H15M6 6V13M4.500 16H16.500M7 19H14V24H7Z', 'M19 9A3 3 0 1 0 25 9A3 3 0 1 0 19 9M27.500 5V15M25 8H27.500M19 17H27.500V21M20 24A3 2 0 0 1 27 24', 'M31 6V24M35 5V15L31 20M35 15L39 24', 'M42 6H50M43 10A3 2.500 0 1 0 49 10A3 2.500 0 1 0 43 10M51.500 5V15M42 17H51V21H43V25', 'M55 6V13H61V6M55 9.500H61M53.500 16H62M55 19H61V24H55Z'];
const SEAL_BOTTOM = ['M5 29H13L5 40M9 34L14 40M15.500 28V49M5 43V49H12', 'M19 29H26M20 32A3 2.500 0 1 0 26 32M22 37V43M28 28V43M19 43V49H28', 'M31 29H38M31 34H38M31 29V40H38M34 43V49M40 28V50', 'M43 29H50M46 31V35M43 35H50M43 39V49H50V39ZM43 44H50', 'M54 32A3 3 0 1 0 60 32A3 3 0 1 0 54 32M54 39H61M54 43H60V48H54ZM62 28V50'];

const COLS = [32, 44, 8, 43, 36, 36, 64, 74, 38, 26, 22, 10, 9, 16, 76];

const Statement = ({ first }) => (
  <Form>
    <colgroup>{COLS.map((w, i) => <col key={i} style={{ width: w }} />)}</colgroup>
    <tbody>
      <Row $h={19}>
        <Td colSpan={12} rowSpan={2} $bold $size={14}>장기요양급여비용  명세서</Td>
        <Td colSpan={3}>□  퇴소</Td>
      </Row>
      <Row $h={19}><Td colSpan={3}>□  중간</Td></Row>
      <Row $h={30}>
        <Td colSpan={3}><Pair>{'장기요양\n기관기호'}</Pair></Td>
        <Td colSpan={5} $size={14}>2-482200000-4</Td>
        <Td colSpan={4} $size={12}>장기요양기관명</Td>
        <Td colSpan={3} $size={10}>통영노인통합지원센터</Td>
      </Row>
      <Row $h={22}>
        <Td colSpan={3}>주  소</Td>
        <Td colSpan={5} $pad={8} $size={14}>650-140    통영시  <Wavy>발개로</Wavy>  153</Td>
        <Td colSpan={4} $size={12}>사업자등록번호</Td>
        <Td colSpan={3} $size={14}>612-82-69749</Td>
      </Row>
      <Row $h={31}>
        <Td colSpan={3}>성  명</Td>
        <Td colSpan={2}><Pair>{'장기요양\n인정번호'}</Pair></Td>
        <Td colSpan={3}>급여제공기간</Td>
        <Td colSpan={7}>영수증  번호</Td>
      </Row>
      <Row $h={21}>
        <Td colSpan={3}>강  둘  선</Td>
        <Td colSpan={2} $size={12}>L0011002526</Td>
        <Td colSpan={3} $pad={4} $size={13}>2014 .8 . 1 .    ~2014.  8.  31  .</Td>
        <Td colSpan={7} $size={14}>2014-</Td>
      </Row>
      <Row $h={19}>
        <Td colSpan={5}>항목</Td>
        <Td colSpan={3}>금액</Td>
        <Td colSpan={7}>금액산정내역</Td>
      </Row>
      <Row $h={25}>
        <Td rowSpan={4} $lh={16}>{'급\n여'}</Td>
        <Td colSpan={4} $pad={8}>본인부담금①</Td>
        <Td colSpan={3} $pad={8}>미대상자</Td>
        <Td colSpan={5} rowSpan={2} $size={12} $lh={20}>{'총액(급여+ 비급여)\n⑨(③+ ⑧)'}</Td>
        <Td colSpan={2} rowSpan={2} $pad={6} $size={14}>706,800</Td>
      </Row>
      <Row $h={28}>
        <Td colSpan={4} rowSpan={2} $pad={8}>공단부담금②</Td>
        <Td colSpan={3} rowSpan={2} $pad={7} $size={14}>706,800</Td>
      </Row>
      <Row $h={5}>
        <Td colSpan={5} rowSpan={2} $size={12}>{'본인부담총액\n⑩(①+ ⑧)'}</Td>
        <Td colSpan={2} rowSpan={2} $pad={first ? 1 : 8}>
          {first ? <>미대<Caret />상자</> : '미대상자'}
        </Td>
      </Row>
      <Row $h={29}>
        <Td colSpan={4} $pad={8}>급여  계③(①+ ②)</Td>
        <Td colSpan={3} $pad={7} $size={14}>706,800</Td>
      </Row>
      <Row $h={28}>
        <Td rowSpan={9} $lh={17}>{'비\n급\n여'}</Td>
        <Td colSpan={4} $pad={8}>식사재료비④</Td>
        <Td colSpan={3} $pad={2}>-</Td>
        <Td colSpan={5} $size={12}>이미 납부한 금액⑪</Td>
        <Td colSpan={2} $pad={2}>-</Td>
      </Row>
      <Row $h={19}>
        <Td colSpan={4} rowSpan={2} $pad={8}>이  ·  미용비⑥</Td>
        <Td colSpan={3} rowSpan={2} $pad={2}>-</Td>
        <Td rowSpan={4} $pad={1} $size={12} $lh={16}>
          {'수    납\n금액'}
          <Middle>⑫</Middle>
          <Middle>(⑩-⑪)</Middle>
        </Td>
        <Td colSpan={4}>카드</Td>
        <Td colSpan={2} />
      </Row>
      <Row $h={33}>
        <Td colSpan={4} $size={12}>현금영수증</Td>
        <Td colSpan={2} />
      </Row>
      <Row $h={20}>
        <Td rowSpan={5} $size={12}>기타⑦</Td>
        <Td colSpan={3} rowSpan={5} />
        <Td colSpan={3} rowSpan={5} $pad={8}>-</Td>
        <Td colSpan={4}>현금</Td>
        <Td colSpan={2} />
      </Row>
      <Row $h={19}>
        <Td colSpan={4}>합계</Td>
        <Td colSpan={2}>-</Td>
      </Row>
      <Row $h={19}><Td colSpan={7}>현금영수증</Td></Row>
      <Row $h={19}><Td colSpan={3} $pad={2}>신분확인번호</Td><Td colSpan={4} /></Row>
      <Row $h={19}><Td colSpan={3} $pad={2}>현금승인번호</Td><Td colSpan={4} /></Row>
      <Row $h={56}>
        <Td colSpan={4}>{first ? '비급여 계' : <><Wavy>비급여</Wavy> 계</>}{'\n⑧(④+ ⑤+ ⑥+ ⑦)'}</Td>
        <Td colSpan={3} $pad={2}>-</Td>
        <Td colSpan={7} $pad={2} $lh={18} $flush>
          {'※  비고\n연말  정산은  (12월31일입금분'}
          <Indented>까지  입니다)</Indented>
        </Td>
      </Row>
      <Row $h={30}>
        <Td colSpan={2} rowSpan={2} $size={12} $lh={21}>{'신용카드를\n사용하실  때'}</Td>
        <Td colSpan={2}><Pair>{'회원\n번호'}</Pair></Td>
        <Td colSpan={2} />
        <Td>승인번호</Td>
        <Td />
        <Td colSpan={2}>할부</Td>
        <Td colSpan={4} />
        <Td>사용금액</Td>
      </Row>
      <Row $h={30}>
        <Td colSpan={2}><Pair>{'카드\n종류'}</Pair></Td>
        <Td colSpan={2} />
        <Td>유효기간</Td>
        <Td />
        <Td colSpan={2} $size={12}>가맹점번호</Td>
        <Td colSpan={4} />
        <Td />
      </Row>
      <Row $h={59}>
        <Td colSpan={15} $flush>
          <SignBox>
            <SignDate><span>2014년 .</span><span>8</span><span>.</span><span>.</span></SignDate>
            <SignLine>
              <span>장기요양기관명:</span>
              <span>도남사회복지관</span>
              <span>통영노인통합지원센터</span>
              <span>대표자명:</span>
              <Signer><span>배</span><span>은</span><span>영</span><span>희</span></Signer>
            </SignLine>
            <Seal viewBox="0 0 65 54" aria-hidden="true">
              <rect width="65" height="54" fill="#e9b6cc" fillOpacity=".3" />
              <rect x="2" y="2" width="61.500" height="50.500" fill="none" stroke="#c05a7a" strokeWidth="1.500" strokeOpacity=".8" />
              <path d={SEAL_TOP.concat(SEAL_BOTTOM).join('')} fill="none" stroke="#c2577a" strokeOpacity=".7" strokeWidth="1.300" />
            </Seal>
          </SignBox>
        </Td>
      </Row>
      <Row $h={112}>
        <Td colSpan={15} $flush>
          <Notes $low={!first}>
            <Note>
              <span>*</span>
              <div>
                <Spread>이 명세서(영수증)는 「소득세법」에 따른 의료비 또는 「조세특례제한법」에 따른 현금</Spread>
                <Spread>영수증(현금영수증 승인번호가 기재된 경우) 공제신청에 사용할 수 있습니다. 다만, 지출</Spread>
                <Plain>증빙용으로  발급된  현금영수증(지출증빙)은  공제신청에  사용할  수  없습니다.</Plain>
              </div>
            </Note>
            <Note>
              <span>*</span>
              <Plain>이  명세서(영수증)에  대한  세부내역을  요구할  수  있습니다.</Plain>
            </Note>
            {first && (
              <Receipt>
                <Plain>※담당자로부터  직접명세서  제공받음</Plain>
                <span>/</span>
                <span>/</span>
                <span>(인</span>
              </Receipt>
            )}
          </Notes>
        </Td>
      </Row>
    </tbody>
  </Form>
);

/* ---------- rulers ---------- */

const MM = 96 * 1.05 / 25.4;

const HorizontalRuler = () => {
  const zero = 475;
  const ticks = [];
  for (let i = -119; i <= 177; i += 1) {
    const x = Math.round(zero + i * MM);
    const h = i % 10 === 0 ? 5 : i % 5 === 0 ? 4 : 2;
    ticks.push(<rect key={i} x={x} y={14 - h} width="1" height={h} fill="#000" />);
    if (i % 10 === 0) {
      ticks.push(<text key={`t${i}`} x={x + (i ? 0 : 1)} y="9" textAnchor="middle">{Math.abs(i / 10)}</text>);
    }
  }
  return (
    <RulerSvg width="1181" height="19">
      <rect x="0" y="1" width="1181" height="13" fill="#d3d3d3" />
      <rect x="470" y="1" width="92" height="13" fill="#f0f0f0" />
      <path d="M0 .5H1181M1180.500 0V14" stroke="#8a8a8a" />
      {ticks}
      <path d="M464.500 .5H473.500V2.500L469.500 7.500L473.500 12V18.500H464.500V12L468.500 7.500L464.500 2.500Z" fill="#cfe4fa" stroke="#3f74ae" />
      <path d="M464.500 13.500H473.500" stroke="#3f74ae" />
      <path d="M565.500 13.500V10L569.500 6.500L573.500 10V13.500Z" fill="#a9cdf2" stroke="#3f74ae" />
      <path d="M531.500 14V18" stroke="#5c7da5" />
      <rect x="-3" y="-3" width="8" height="2" fill="#fff" stroke="#3f74ae" />
    </RulerSvg>
  );
};

const VerticalRuler = () => {
  const zero = 257;
  const ticks = [];
  for (let i = -64; i <= 140; i += 1) {
    const y = Math.round(zero + i * MM);
    const w = i % 10 === 0 ? 5 : i % 5 === 0 ? 4 : 2;
    ticks.push(<rect key={i} x={14 - w} y={y} width={w} height="1" fill="#000" />);
    if (i % 10 === 0) {
      ticks.push(
        <text key={`t${i}`} transform={`translate(8 ${y}) rotate(-90)`} textAnchor="middle">{Math.abs(i / 10)}</text>,
      );
    }
  }
  return (
    <RulerSvg width="15" height="830">
      <rect x="1" y="0" width="13" height="830" fill="#d3d3d3" />
      <rect x="1" y="258" width="13" height="30" fill="#f0f0f0" />
      <path d="M.5 0V830" stroke="#8a8a8a" />
      {ticks}
      <path d="M.5 22.500L4.500 18.500L8.500 22.500H6.500V26.500H2.500V22.500Z" fill="#cfe4fa" stroke="#3f74ae" />
    </RulerSvg>
  );
};

/* ---------- scroll bars, tabs, status ---------- */

const VScroll = styled.div`
  grid-column: 3;
  grid-row: 1 / 3;
  display: flex;
  flex-direction: column;
  padding-top: 2px;
  background: linear-gradient(90deg, #cfcfcf, #e6e6e6 50%, #dedede);
`;
const SplitBar = styled.span`
  height: 5px;
  margin-bottom: 2px;
  border: 1px solid #9a9a9a;
  background: #f3f3f3;
`;
const BlueButton = styled.button`
  display: grid;
  place-items: center;
  flex: none;
  width: 15px;
  height: ${(p) => p.$h || 16}px;
  padding: 0;
  border: 1px solid #5b84b4;
  background: linear-gradient(90deg, #d5e7fb, #a4c4e8);
  color: ${INK};
`;
const Thumb = styled(BlueButton)`
  margin: auto 0 4px;
`;
const BottomBar = styled.div`
  display: flex;
  height: 20px;
  padding-right: 15px;
  border-top: 1px solid #8f8f8f;
  border-bottom: 1px solid #9bb0c8;
  background: #dadada;
`;
const TabSide = styled.div`
  flex: 952;
  display: flex;
  align-items: flex-start;
  padding: 2px 0 0 3px;
  gap: 1px;
`;
const ScrollSide = styled.div`
  flex: 947;
  display: flex;
  align-items: center;
  gap: 1px;
`;
const Splitter = styled.span`
  width: 5px;
  height: 15px;
  margin-right: 1px;
  border: 1px solid #8b8b8b;
  background: #f6f6f6;
`;
const GrayButton = styled.button`
  display: grid;
  place-items: center;
  width: 16px;
  height: 15px;
  padding: 0;
  border: 1px solid #b0b0b0;
  background: #e6e6e6;
`;
const Track = styled.span`
  flex: 1;
  height: 15px;
  border: 1px solid #ababab;
  background: linear-gradient(#d0d0d0, #e8e8e8 50%, #dedede);
`;
const Tab = styled.button`
  height: 20px;
  margin-top: -3px;
  padding: 0 11px 2px 6px;
  border: 0;
  background: linear-gradient(#fff 40%, #f9cccc);
  clip-path: polygon(0 0, 100% 0, calc(100% - 5px) 100%, 0 100%);
  color: #d01818;
  font-weight: 700;
  line-height: 18px;
`;
const StatusBar = styled.footer`
  display: flex;
  align-items: center;
  height: 21px;
  padding: 0 0 1px 1px;
  border-top: 1px solid #7e9cc2;
  background: ${sheen};
  color: ${INK};
  line-height: 18px;
`;
const Stat = styled.span`
  width: ${(p) => p.$w}px;
  padding-left: ${(p) => p.$pad || 1}px;
  white-space: pre;
  ${(p) => p.$bar && css`box-shadow: inset 1px 0 #8aa5c7;`}
  ${(p) => p.$bar && css`height: 12px; line-height: 12px;`}
`;
const ImePalette = styled.aside`
  position: absolute;
  right: 0;
  bottom: 0;
  display: flex;
  align-items: center;
  gap: 1px;
  width: 123px;
  height: 28px;
  padding: 0 3px;
  border: 1px solid #f5faff;
  outline: 1px solid #6d8fb8;
  background: #b4cfee;
`;
const ImeButton = styled.button`
  display: grid;
  place-items: center;
  width: 18px;
  height: 20px;
  padding: 0;
  border: 0;
  background: none;
  font-size: 15px;
  line-height: 18px;
  font-weight: 500;
`;

const MENUS = [['파일', 'F'], ['편집', 'E'], ['보기', 'U'], ['입력', 'D'], ['모양', 'J'], ['도구', 'K'], ['표', 'Q'], ['창', 'W'], ['도움말', 'H']];

const Tri = ({ d, c = '#234a7d' }) => (
  <svg width="9" height="13" viewBox="0 0 9 13" aria-hidden="true"><path d={d} fill={c} /></svg>
);
const TO_LEFT = 'M6.500 3V10L2.500 6.500Z';
const TO_RIGHT = 'M2.500 3V10L6.500 6.500Z';

export default function App() {
  return (
    <Frame>
      <Global />
      <TitleBar>
        <svg width="18" height="18" viewBox="0 0 18 18" aria-hidden="true">
          <rect x="1" y="1" width="16" height="16" rx="3" fill="#b51d22" stroke="#f0d7d7" />
          <path d="M6.500 4H11.500M4.500 6.500H13.500M5.500 14.500H12.500" stroke="#fff" strokeWidth="1.600" />
          <circle cx="9" cy="10" r="2" fill="none" stroke="#fff" strokeWidth="1.500" />
        </svg>
        <AppTitle>강둘선-수급.hwp [C:₩Users₩Administrator₩Desktop₩노인₩급여(장기요양)₩] - 한글과컴퓨터 ᄒᆞᆫ글</AppTitle>
        <RoundButton aria-label="최소화"><svg width="11" height="11"><path d="M2 9H9" stroke="#3a5f92" strokeWidth="2" /></svg></RoundButton>
        <RoundButton aria-label="이전 크기로"><svg width="11" height="11" fill="none" stroke="#3a5f92" strokeWidth="1.500"><path d="M3.500 3V1.500H10V6H8.500M1 5H7V9.500H1Z" /></svg></RoundButton>
        <RoundButton aria-label="닫기"><svg width="11" height="11"><path d="M1.500 1.500L9.500 9.500M9.500 1.500L1.500 9.500" stroke="#3a5f92" strokeWidth="2" /></svg></RoundButton>
      </TitleBar>

      <MenuBar>
        <Grip $after={14} />
        {MENUS.map(([t, k]) => <MenuItem key={t}>{t}(<u>{k}</u>)</MenuItem>)}
        <MenuClose aria-label="문서 닫기"><svg width="8" height="8"><path d="M1 1L7 7M7 1L1 7" stroke="#4c78ad" strokeWidth="2" /></svg></MenuClose>
      </MenuBar>

      <ToolRow $indent={24}>
        <Grip $after={9} />
        <Tools set="new tmpl folder v save | print preview | undo v redo v find | cut copy paste stamp | charshape parashape style columns | link1 link2 | picture table v chart gana fx snow | ab pages pagered | book board play1 play2 cube1 cube2 vds" />
      </ToolRow>

      <ToolRow $indent={2}>
        <Grip $after={7} />
        <Combo label="스타일" w={97} icon="cstyle" value="바탕글" />
        <Combo label="언어" w={97} icon="clang" value="대표" />
        <Combo label="글꼴" w={132} icon="cfont" value="바탕" />
        <Combo label="글자 크기" w={67} icon="csize" value="9" />
        <Tools set="| bold italic under strike color v boxga v | marker v | just left center right |" on="just" />
        <Combo label="줄 간격" w={73} icon="cspace" value="160 %" />
        <Tools set="outdent indent | num bullet |" />
        <Combo label="확대" w={93} icon="czoom" value="105 %" />
      </ToolRow>

      <ToolRow $indent={2}>
        <Grip $after={7} />
        <DrawMenu>그리기</DrawMenu>
        <Tools set="v dline drect dell darc dpoly dcurve dpen dconn v dtext dfold | dsel dgrp dung | dpenc v dfill v dup ddn | dwid v ddash v darr v | dshad v | g1 g2 g3 g4 g5 | g6 g7 g8 g9 g10 g11 | g12 g13 g14 oroll groll" />
      </ToolRow>

      <ToolRow $indent={137} $last>
        <Grip $after={9} />
        <Tools set="tdraw terase" />
        <Combo label="선 종류" w={109} thick={2} />
        <Combo label="선 굵기" w={109} thick={1} text={54} value="0.12 mm" />
        <Tools set="bpen v | tborder v tfill v tup tdn | table v troll tpic | tlist v | h1 h2 h3 h4 | h5 h6 h7 h8 | h9 h10" />
      </ToolRow>

      <Work>
        <TabStop aria-label="탭 종류"><svg width="6" height="6"><path d="M0 1H6L1.500 5.500Z" fill="#000" /></svg></TabStop>
        <HRuler><HorizontalRuler /></HRuler>
        <VRuler><VerticalRuler /></VRuler>
        <Desk>
          <PrevSheet />
          <Sheet>
            <Marks $gap={19}><Mark $left $top /><Mark $top /></Marks>
            <Copies>
              <Statement first />
              <CutLine />
              <Statement />
            </Copies>
            <Marks $gap={40}><Mark $left /><Mark /></Marks>
          </Sheet>
        </Desk>
        <VScroll>
          <SplitBar />
          <BlueButton aria-label="위로"><Tri d="M1.500 8.500H7.500L4.500 5Z" /></BlueButton>
          <Thumb aria-label="스크롤 막대" $h={65}>
            <svg width="9" height="9"><path d="M1 1.500H8M1 4.500H8M1 7.500H8" stroke="#234a7d" /></svg>
          </Thumb>
          <BlueButton aria-label="아래로"><Tri d="M1.500 5H7.500L4.500 8.500Z" /></BlueButton>
          <BlueButton aria-label="쪽 보기">
            <svg width="11" height="11" fill="none" stroke="#234a7d"><path d="M1.500 1.500H9.500V9.500H1.500ZM4 3.500H7.500V7.500H3.500V3.500Z" /></svg>
          </BlueButton>
          <BlueButton aria-label="이전 쪽"><Tri d="M1.500 6.500H7.500L4.500 3ZM1.500 10.500H7.500L4.500 7Z" /></BlueButton>
          <BlueButton aria-label="다음 쪽"><Tri d="M1.500 3H7.500L4.500 6.500ZM1.500 7H7.500L4.500 10.500Z" /></BlueButton>
        </VScroll>
      </Work>

      <BottomBar>
        <TabSide>
          <Splitter />
          <GrayButton aria-label="이전 탭"><Tri d={TO_LEFT} c="#a2a2a2" /></GrayButton>
          <GrayButton aria-label="다음 탭"><Tri d={TO_RIGHT} c="#a2a2a2" /></GrayButton>
          <Tab>강둘선-수급</Tab>
        </TabSide>
        <ScrollSide>
          <Splitter />
          <GrayButton aria-label="왼쪽"><Tri d={TO_LEFT} c="#a2a2a2" /></GrayButton>
          <Track />
          <GrayButton aria-label="오른쪽"><Tri d={TO_RIGHT} c="#a2a2a2" /></GrayButton>
        </ScrollSide>
      </BottomBar>

      <StatusBar>
        <Stat $w={48} $pad={18} $bar>11쪽</Stat>
        <Stat $w={104} $pad={18}>1단</Stat>
        <Stat $w={44} $pad={22} $bar>1줄</Stat>
        <Stat $w={59} $pad={20}>4칸</Stat>
        <Stat $w={153} $pad={2} $bar>(N10)</Stat>
        <Stat $w={83} $pad={15} $bar>{'1/    1 구역'}</Stat>
        <Stat $w={34} $pad={3} $bar>삽입</Stat>
        <Stat $w={4} $bar />
      </StatusBar>

      <ImePalette>
        <ImeButton aria-label="한글">한</ImeButton>
        <ImeButton aria-label="반자"><Svg viewBox="0 0 18 18">{line('M2 5Q5 0 8 4Q8 7 2 11H8', '#2f6db8', 2)}{fill('M7 14L13 5L17 8L11 16Z', '#4fa3e0', '#1f5a96')}</Svg></ImeButton>
        <ImeButton aria-label="필기"><Svg viewBox="0 0 18 18">{fill('M1 13L8 3L12 5L7 13Z', '#62b4e4', '#3b6a8c')}{roller}</Svg></ImeButton>
        <ImeButton aria-label="자판"><Svg viewBox="0 0 18 18">{line('M6 2Q13 1 11 4Q9 5 10 7', '#4f6a8c')}<rect x="2.500" y="7.500" width="13" height="8" rx="1" fill="#f2f6fb" stroke="#4f6a8c" />{line('M4 10.500H14M5 12.500H13', '#4f6a8c', 1, { strokeDasharray: '2 1' })}</Svg></ImeButton>
        <ImeButton aria-label="설정"><Svg viewBox="0 0 18 18">{fill('M3 5L6 3H13L16 6H11V8H8V6H5Z', '#c9ced6', '#4a5260')}{fill('M8.500 8.500H11V16.500H8.500Z', '#f2a020', '#8a5510')}</Svg></ImeButton>
        <ImeButton aria-label="도움말"><Svg viewBox="0 0 18 18">{fill('M9 1L17 9L9 17L1 9Z', '#2f7fd6', '#1c4f96')}<text x="9" y="13" fontSize="11" fontWeight="700" textAnchor="middle" fill="#fff">?</text></Svg></ImeButton>
      </ImePalette>
    </Frame>
  );
}
